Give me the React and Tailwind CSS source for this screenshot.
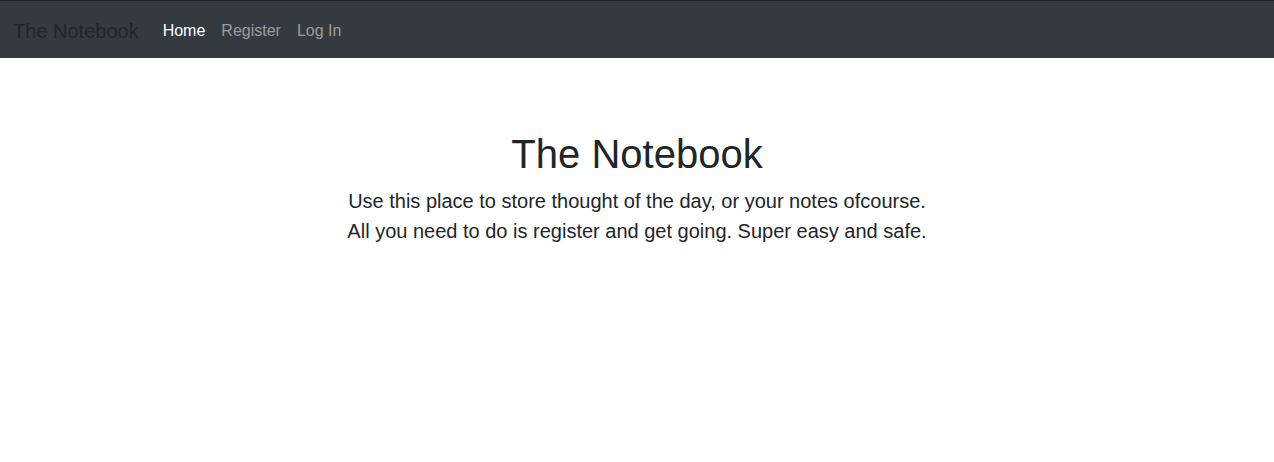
import React from 'react';

const App = () => {
  return (
    <div className="min-h-screen bg-white font-['Liberation_Sans',Arial,sans-serif] text-[#212529]">
      <nav className="h-[58px] bg-[#343a40] border-t border-[#1d2124] pt-[2px] flex items-center px-[13px]">
        <a href="#" className="text-[20px] leading-[30px] text-[#212529] mr-[16px]">
          The Notebook
        </a>
        <div className="flex items-center text-[16px] leading-6">
          <a href="#" className="px-2 text-white">Home</a>
          <a href="#" className="px-2 text-white/50">Register</a>
          <a href="#" className="px-2 text-white/50">Log In</a>
        </div>
      </nav>

      <main className="pt-[72px] text-center">
        <h1 className="text-[40px] leading-[48px] mb-2">The Notebook</h1>
        <p className="text-[20px] leading-[30px]">
          Use this place to store thought of the day, or your notes ofcourse.
          <br />
          All you need to do is register and get going. Super easy and safe.
        </p>
      </main>
    </div>
  );
};

export default App;
